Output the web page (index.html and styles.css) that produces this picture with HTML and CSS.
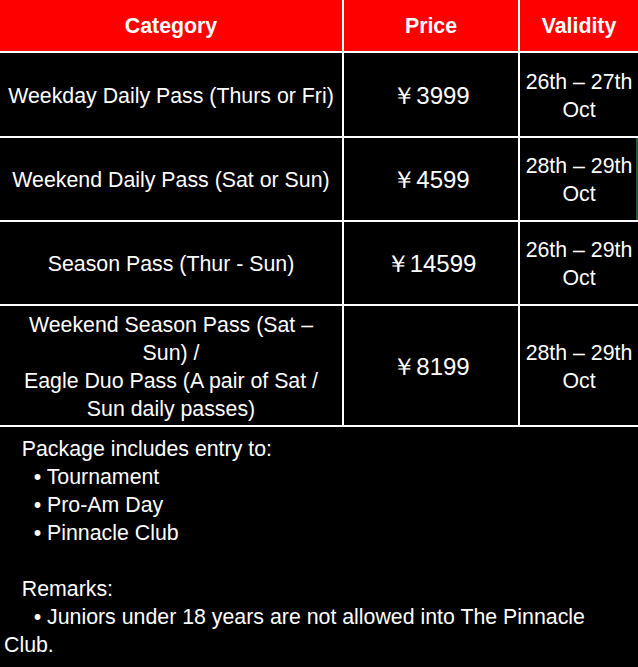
FILE: index.html
```html
<!DOCTYPE html>
<html>
<head>
<meta charset="utf-8">
<link rel="stylesheet" href="styles.css">
</head>
<body>
<div class="pass-table">
  <div class="cell head">Category</div>
  <div class="cell head">Price</div>
  <div class="cell head">Validity</div>

  <div class="cell cat">Weekday Daily Pass (Thurs or Fri)</div>
  <div class="cell price">￥3999</div>
  <div class="cell">26th – 27th Oct</div>

  <div class="cell cat">Weekend Daily Pass (Sat or Sun)</div>
  <div class="cell price">￥4599</div>
  <div class="cell edge">28th – 29th Oct</div>

  <div class="cell cat">Season Pass (Thur - Sun)</div>
  <div class="cell price">￥14599</div>
  <div class="cell">26th – 29th Oct</div>

  <div class="cell cat">Weekend Season Pass (Sat – Sun) /<br>Eagle Duo Pass (A pair of Sat / Sun daily passes)</div>
  <div class="cell price">￥8199</div>
  <div class="cell">28th – 29th Oct</div>

  <div class="notes">   Package includes entry to:
     • Tournament
     • Pro-Am Day
     • Pinnacle Club

   Remarks:
     • Juniors under 18 years are not allowed into The Pinnacle Club.</div>
</div>
</body>
</html>
```
FILE: styles.css
```css
html, body {
  margin: 0;
  padding: 0;
  background: #000;
}
body {
  font-family: "Liberation Sans", Arial, sans-serif;
  color: #fff;
  width: 638px;
  height: 667px;
  overflow: hidden;
}
.pass-table {
  display: grid;
  grid-template-columns: 342px 174px 118px;
  grid-template-rows: 51px 83px 82px 82px 119px auto;
  gap: 2px;
  background: #fff;
  width: 638px;
  font-size: 21.33px;
  line-height: 28px;
}
.cell {
  background: #000;
  display: flex;
  align-items: center;
  justify-content: center;
  text-align: center;
  padding: 2px 2px 0 2px;
}
.cell.cat {
  padding-left: 6px;
  padding-right: 6px;
}
.cell.head {
  background: #ff0000;
  font-weight: bold;
  padding-top: 1px;
}
.cell.price {
  font-size: 24px;
}
.cell.edge {
  box-shadow: inset -2px 0 0 #1e5a36;
}
.notes {
  grid-column: 1 / -1;
  background: #000;
  white-space: pre-wrap;
  padding: 8px 4px 40px 4px;
}
```
